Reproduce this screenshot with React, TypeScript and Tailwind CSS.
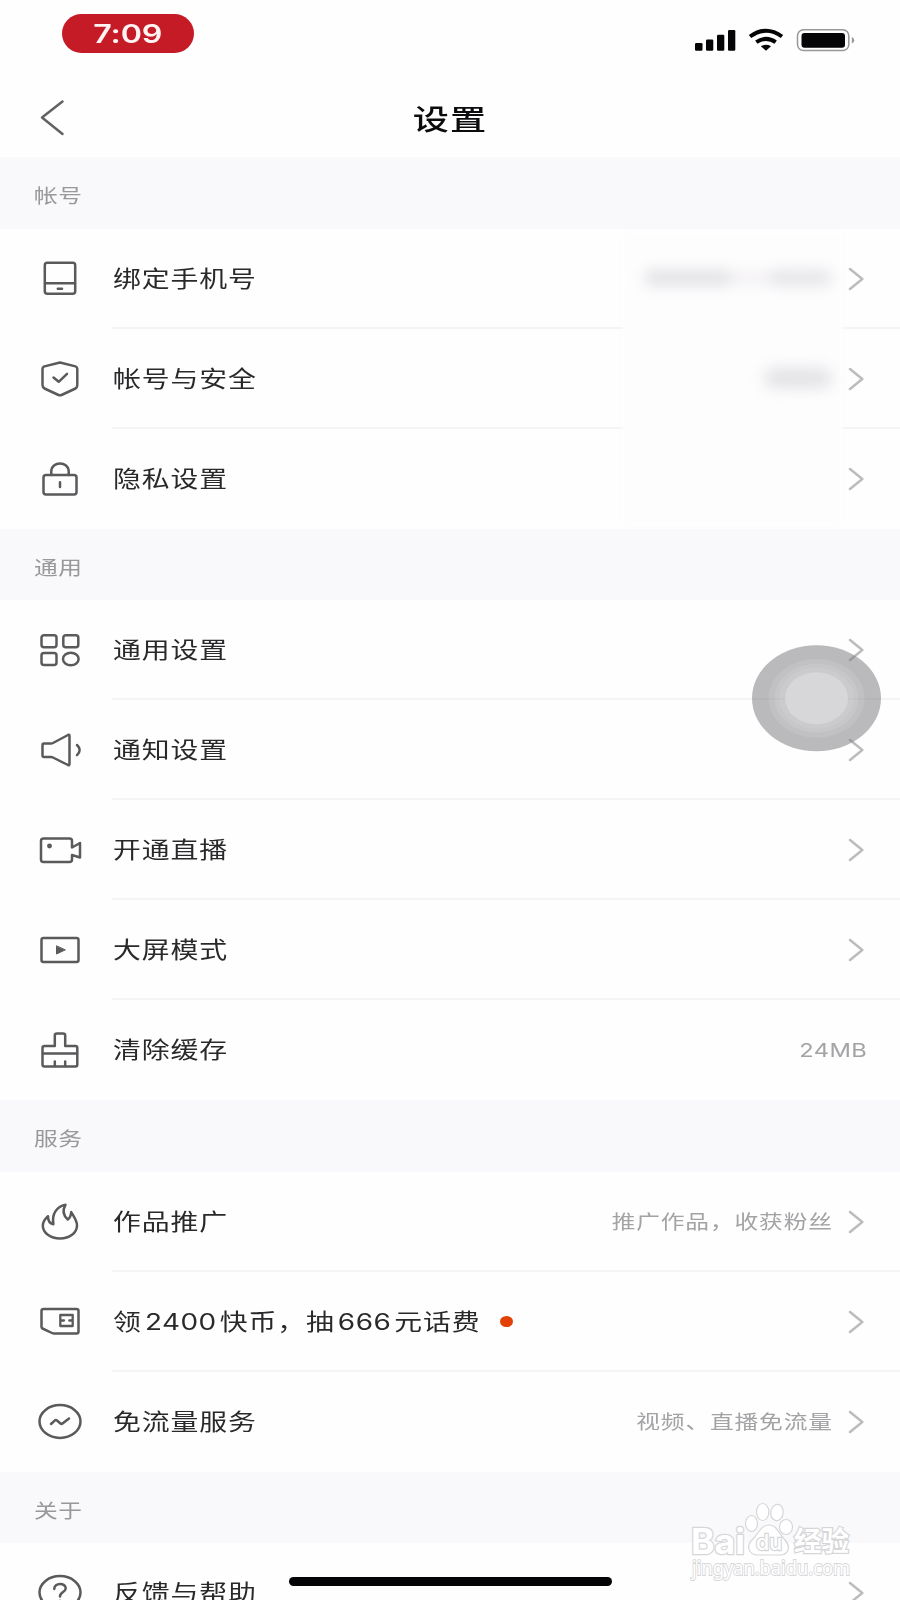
import type { ReactNode } from 'react';

function Icon({ children }: { children: ReactNode }) {
  return (
    <svg
      className="block h-10 w-12 shrink-0"
      viewBox="36 0 48 40"
      fill="none"
      stroke="#5a5a5d"
      strokeWidth="2.5"
      strokeLinecap="round"
      strokeLinejoin="round"
    >
      {children}
    </svg>
  );
}

const icons = {
  phone: (
    <Icon>
      <rect x="44.800" y="3.800" width="30.400" height="31" rx="2.500" />
      <path d="M45 24.300H75M57.800 29.700H62" />
    </Icon>
  ),
  shield: (
    <Icon>
      <path d="M60 3.500L75.500 7.400Q77.300 8 77.300 10V26Q77.300 28.200 75.500 29.500L61.500 36Q60 36.700 58.500 36L44.500 29.500Q42.500 28.200 42.500 26V10Q42.500 8 44.500 7.400Z" />
      <path d="M53.500 18.500L58.700 22.800L67 14.800" />
    </Icon>
  ),
  lock: (
    <Icon>
      <rect x="43.500" y="16" width="33" height="19.500" rx="2.500" />
      <path d="M51.300 16V12.500C51.300 1.800 68.700 1.800 68.700 12.500V16M60 23.300V28" />
    </Icon>
  ),
  grid: (
    <Icon>
      <rect x="41.500" y="5.200" width="15" height="12" rx="2.500" />
      <rect x="63.300" y="5.200" width="15" height="12" rx="2.500" />
      <rect x="41.500" y="23" width="15" height="12" rx="2.500" />
      <ellipse cx="70.800" cy="29" rx="7.800" ry="6.300" />
    </Icon>
  ),
  speaker: (
    <Icon>
      <path d="M44 13.500H51Q52 13.500 53 13L68 5Q69.500 4.300 69.500 6V34Q69.500 35.700 68 35L53 27.500Q52 27 51 27H44Q42.500 27 42.500 25.500V15Q42.500 13.500 44 13.500Z" />
      <path d="M77 15Q82.300 20 77 25.200" />
    </Icon>
  ),
  camera: (
    <Icon>
      <path d="M72 14V11Q72 8.500 69.500 8.500H43.500Q41 8.500 41 11V29.500Q41 32 43.500 32H69.500Q72 32 72 29.500V25L80 27.500V13L72 17.500V14" />
      <circle cx="49.500" cy="16" r="1.200" fill="#5a5a5d" />
    </Icon>
  ),
  screen: (
    <Icon>
      <rect x="41.500" y="8" width="37" height="24" rx="2" />
      <path d="M56.500 16.200V24L65 20Z" fill="#5a5a5d" strokeWidth="1" />
    </Icon>
  ),
  brush: (
    <Icon>
      <path d="M54.800 16V5.500Q54.800 3.500 57 3.500H63Q65.200 3.500 65.200 5.500V16H75.500Q77.300 16 77.300 18V34.500Q77.300 36.500 75.500 36.500H44.500Q42.500 36.500 42.500 34.500V18Q42.500 16 44.500 16Z" />
      <path d="M43 23.500H77M54.800 31.500V36M65.200 31.500V36" />
    </Icon>
  ),
  fire: (
    <Icon>
      <path d="M48 14.200C45 17 42.800 19.500 42.800 23.500C42.800 31 50.500 36.500 60 36.500C69.500 36.500 77 31 77 23.500C77 18.500 74 15 71.200 10C71 13 70 16 67.800 17.500C64 14 61.800 9 65.500 2.800C57 4.500 51.500 11.500 53.400 22.300C49.800 21.500 48 18.500 48 14.200Z" />
    </Icon>
  ),
  sim: (
    <Icon>
      <path d="M43.500 7H76.500Q78.500 7 78.500 9V29.500Q78.500 31.500 76.500 31.500H54Q53 31.500 52 31L42.500 26.500Q41.500 26 41.500 25V9Q41.500 7 43.500 7Z" />
      <path d="M60.300 13H72.700V24H60.300ZM62 18.500H64M69.300 18.500H71.500" strokeWidth="2.300" />
    </Icon>
  ),
  wave: (
    <Icon>
      <ellipse cx="60" cy="19.500" rx="20.500" ry="16.400" />
      <path d="M51 22L55 18.300Q56 17.500 57 18.500L60.500 21.500Q61.500 22.300 62.500 21.500L69 16.500" />
    </Icon>
  ),
  help: (
    <Icon>
      <ellipse cx="60" cy="19.500" rx="20.500" ry="16.400" />
      <path d="M54.300 16C54 9.500 66 9.500 65.700 15.500C65.500 19.300 60 18.800 60 23.500M60 27.800V28" />
    </Icon>
  ),
};

type RowData = {
  icon: keyof typeof icons;
  label: ReactNode;
  value?: string;
  hidden?: string;
  dot?: boolean;
  plain?: boolean;
};

const sections: { title: string; head: string; rows: RowData[] }[] = [
  {
    title: '帐号',
    head: 'h-[72px]',
    rows: [
      { icon: 'phone', label: '绑定手机号', hidden: 'phone' },
      { icon: 'shield', label: '帐号与安全', hidden: 'status' },
      { icon: 'lock', label: '隐私设置' },
    ],
  },
  {
    title: '通用',
    head: 'h-[71px]',
    rows: [
      { icon: 'grid', label: '通用设置' },
      { icon: 'speaker', label: '通知设置' },
      { icon: 'camera', label: '开通直播' },
      { icon: 'screen', label: '大屏模式' },
      { icon: 'brush', label: '清除缓存', value: '24MB', plain: true },
    ],
  },
  {
    title: '服务',
    head: 'h-[72px]',
    rows: [
      { icon: 'fire', label: '作品推广', value: '推广作品，收获粉丝' },
      {
        icon: 'sim',
        label: (
          <>
            领<span className="mx-[2.500px] tracking-[0.400px]">2400</span>快币，抽
            <span className="mx-[2.500px] tracking-[0.400px]">666</span>元话费
          </>
        ),
        dot: true,
      },
      { icon: 'wave', label: '免流量服务', value: '视频、直播免流量' },
    ],
  },
  { title: '关于', head: 'h-[71px]', rows: [{ icon: 'help', label: '反馈与帮助' }] },
];

function Chevron() {
  return (
    <svg className="mt-[2px] mr-9 ml-[16px] h-6 w-4 shrink-0" viewBox="0 0 16 24" fill="none" stroke="#bcbcbe" strokeWidth="2.5" strokeLinecap="round" strokeLinejoin="round">
      <path d="M2 2L14.300 12L2 22" />
    </svg>
  );
}

function Row({ row, last }: { row: RowData; last: boolean }) {
  return (
    <div className="flex h-[100px] shrink-0 items-center pl-9">
      {icons[row.icon]}
      <div className={`ml-7 flex h-full flex-1 items-center border-b-2 ${last ? 'border-transparent' : 'border-[#f4f4f5]'}`}>
        <span className="mt-[2px] ml-[0.500px] origin-left scale-x-[1.250] text-[22.300px] leading-[34px] font-normal tracking-[0.700px] whitespace-nowrap text-[#29292b]">
          {row.label}
        </span>
        {row.dot && <span className="mt-px ml-[93px] h-[11px] w-[13px] rounded-[50%] bg-[#e24004]" />}
        <span className="flex-1" />
        {row.value && (
          <span
            className={`mt-[1px] origin-right scale-x-[1.230] text-[19.300px] leading-[30px] whitespace-nowrap text-[#a3a3a6] ${row.plain ? 'mr-[33px] tracking-[0.300px]' : '-mr-px tracking-[0.700px]'}`}
          >
            {row.value}
          </span>
        )}
        {row.hidden === 'phone' && (
          <span className="relative z-10 flex items-center blur-[7px]">
            <span className="h-4 w-[88px] rounded-full bg-[#e2e1e4]" />
            <span className="h-3 w-9 bg-[#f1f0f2]" />
            <span className="h-4 w-[64px] rounded-full bg-[#e5e4e7]" />
          </span>
        )}
        {row.hidden === 'status' && <span className="relative z-10 h-[18px] w-[68px] rounded-full bg-[#dfdee1] blur-[8px]" />}
        {!row.plain && <Chevron />}
      </div>
    </div>
  );
}

function StatusIcons() {
  return (
    <svg className="h-10 w-[170px]" viewBox="690 20 170 40">
      <g fill="#050507">
        <rect x="695" y="43" width="7.500" height="7.800" rx="1.200" />
        <rect x="706" y="39.500" width="7.300" height="11.300" rx="1.200" />
        <rect x="717" y="34.700" width="7.300" height="16.100" rx="1.200" />
        <rect x="728" y="30" width="7.300" height="20.800" rx="1.200" />
        <path d="M760.800 46.200L766 50.800L771 46.200Q766 43.500 760.800 46.200Z" />
        <rect x="801.500" y="33" width="43.500" height="14.700" rx="3" />
      </g>
      <path d="M750 36.500Q766 25 782 36.500M756.300 42.200Q766 35.500 775.700 42.200" stroke="#050507" strokeWidth="4" fill="none" />
      <rect x="797.500" y="29.700" width="51.300" height="20.800" rx="6" fill="none" stroke="#98989b" strokeWidth="1.500" />
      <path d="M851.800 37V43.500Q854.200 42.500 854.200 40.200Q854.200 38 851.800 37Z" fill="#98989b" />
    </svg>
  );
}

function Watermark() {
  return (
    <svg className="absolute top-[1495px] left-[680px] h-[90px] w-[180px]" viewBox="680 1495 180 90">
      <g fill="#ffffff" stroke="#d6d6d9" strokeWidth="1.200">
        <ellipse cx="751.500" cy="1523.500" rx="6" ry="8" />
        <ellipse cx="762.700" cy="1512" rx="6.200" ry="8.500" />
        <ellipse cx="777" cy="1512.500" rx="6.200" ry="8.200" transform="rotate(8 777 1512.500)" />
        <ellipse cx="786" cy="1527" rx="6.500" ry="7.500" />
        <path d="M769 1525C777 1525 779 1534 785 1540C792 1548 787 1555 780 1555H758C749 1555 745 1546 753 1539C759 1533 761 1525 769 1525Z" />
        <g fontFamily="Inter, 'Noto Sans CJK SC', sans-serif" fontWeight="700" paintOrder="stroke">
          <text x="691" y="1553.500" fontSize="35" textLength="54" lengthAdjust="spacingAndGlyphs" strokeWidth="2.400">Bai</text>
          <text x="756" y="1550" fontSize="22" textLength="26" lengthAdjust="spacingAndGlyphs" strokeWidth="2.400" fontWeight="500">du</text>
          <text x="794" y="1551" fontSize="27" textLength="55" lengthAdjust="spacingAndGlyphs" strokeWidth="2.400">经验</text>
        </g>
        <text x="692" y="1575" fontSize="20" textLength="158" lengthAdjust="spacingAndGlyphs" fontFamily="'Noto Sans', sans-serif" strokeWidth="1.800" paintOrder="stroke">
          jingyan.baidu.com
        </text>
      </g>
    </svg>
  );
}

export default function App() {
  return (
    <div className="relative flex h-[1600px] w-[900px] flex-col overflow-hidden bg-[#fefefe] font-['Inter','Noto_Sans_CJK_SC',sans-serif]">
      <header className="flex h-[157px] shrink-0 flex-col">
        <div className="flex h-[75px] items-start justify-between pl-[62px]">
          <div className="mt-[14px] flex h-[39px] w-[132px] items-center justify-center rounded-[24px] bg-[#c51b26]">
            <span className="mt-px -ml-px scale-x-[1.240] text-[26px] leading-none font-semibold tracking-[-0.200px] text-[#fff3f3]">7:09</span>
          </div>
          <div className="mt-5 mr-10">
            <StatusIcons />
          </div>
        </div>
        <div className="grid flex-1 grid-cols-[80px_1fr_80px] items-center">
          <svg className="mt-[2px] ml-9 h-10 w-8" viewBox="36 98 32 40" fill="none" stroke="#626265" strokeWidth="2.500" strokeLinecap="round" strokeLinejoin="round">
            <path d="M62.500 102.500L42 118.500L62.500 135" />
          </svg>
          <h1 className="mt-[7px] scale-x-[1.270] text-center text-[28.500px] leading-[44px] font-medium tracking-[0.800px] text-[#0c0c0e]">设置</h1>
        </div>
      </header>

      {sections.map((s) => (
        <section key={s.title} className="flex shrink-0 flex-col">
          <div className={`flex items-center bg-[#f9f8fb] pt-[6px] pl-[34px] ${s.head}`}>
            <h2 className="origin-left scale-x-[1.230] text-[19.300px] leading-[30px] tracking-[0.500px] text-[#98989b]">{s.title}</h2>
          </div>
          {s.rows.map((r, i) => (
            <Row key={r.icon} row={r} last={i === s.rows.length - 1} />
          ))}
        </section>
      ))}

      <div className="absolute top-[232px] left-[622px] h-[293px] w-[221px] bg-[#fefdfe] blur-[3px]" />

      <svg className="absolute top-[640px] left-[745px] h-[116px] w-[142px]" viewBox="745 640 142 116">
        <ellipse cx="816.500" cy="698.200" rx="64.500" ry="53" fill="#7b797c" fillOpacity=".52" />
        <ellipse cx="816.500" cy="698.200" rx="48" ry="39.500" fill="#ffffff" fillOpacity=".1" />
        <ellipse cx="816.500" cy="698.200" rx="42" ry="34.500" fill="#ffffff" fillOpacity=".1" />
        <ellipse cx="816.500" cy="698.200" rx="37.500" ry="30.500" fill="#ffffff" fillOpacity=".08" />
        <ellipse cx="816.500" cy="698.200" rx="31.500" ry="26" fill="#d8d7da" fillOpacity=".9" />
      </svg>

      <div className="absolute top-[1577px] left-[289px] h-[9px] w-[323px] rounded-full bg-[#040406]" />
      <Watermark />
    </div>
  );
}
